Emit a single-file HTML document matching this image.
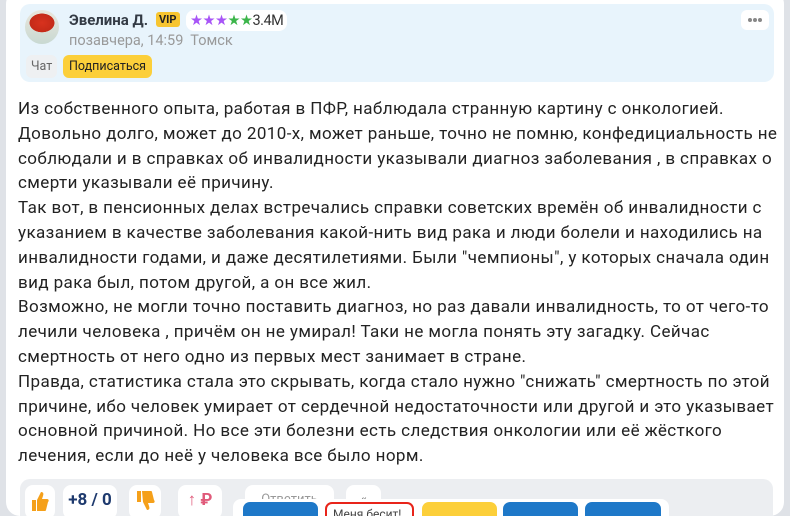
<!DOCTYPE html>
<html><head><meta charset="utf-8"><style>
*{margin:0;padding:0;box-sizing:border-box}
html,body{width:790px;height:516px;overflow:hidden}
body{background:#dfe2e7;font-family:"Roboto","Liberation Sans",sans-serif;position:relative}
.card{position:absolute;left:6px;top:-10px;width:778px;height:526px;background:#fff;border-radius:14px}
.head{position:absolute;left:20px;top:4px;width:754px;height:78px;background:#e8f4fc;border-radius:10px}
.av{position:absolute;left:25px;top:10px;width:34px;height:34px;border-radius:50%;background:radial-gradient(ellipse 60% 45% at 50% 38%,#d8321e 0,#c42a18 60%,transparent 62%),linear-gradient(#e9e6dc,#c9d9d2)}
.name{position:absolute;left:69px;top:11px;font-size:15px;font-weight:bold;color:#333a44}
.vip{position:absolute;left:156px;top:12px;background:#f7c530;color:#222;font-size:11px;font-weight:bold;padding:1px 3px;border-radius:3px}
.stars{position:absolute;left:186px;top:10px;background:#fff;border-radius:8px;height:21px;padding:0 4px;font-size:14.5px;line-height:21px;color:#333;letter-spacing:-0.5px}
.date{position:absolute;left:69px;top:32px;font-size:14.5px;color:#999}
.chat{position:absolute;left:26px;top:55px;background:#eef0f2;color:#666;font-size:12.5px;padding:4px 5px;border-radius:6px}
.sub{position:absolute;left:63px;top:55px;background:#fccf3a;color:#222;font-size:12.5px;padding:4px 6px;border-radius:6px}
.dots{position:absolute;left:741px;top:10px;width:28px;height:20px;background:#fff;border-radius:6px}
.dots i{position:absolute;top:8px;width:4px;height:4px;border-radius:50%;background:#888}
.txt{position:absolute;left:18px;top:97px;font-size:17px;line-height:24.8px;color:#222;white-space:nowrap;letter-spacing:0.4px}
.bar{position:absolute;left:20px;top:479px;width:753px;height:50px;background:#eceef1;border-radius:10px}
.b{position:absolute;top:485px;height:34px;background:#fff;border-radius:8px;text-align:center;line-height:30px}
.fl{position:absolute;left:233px;top:499px;width:436px;height:30px;background:#fff;border-radius:8px}
.fb{position:absolute;top:502px;height:30px;border-radius:7px;background:#1e78c8}
</style></head><body>
<div class="card"></div>
<div class="head"></div>
<div class="av"></div>
<div class="name">Эвелина Д.</div>
<div class="vip">VIP</div>
<div class="stars"><span style="color:#a855f7">★★★</span><span style="color:#3cb54a">★★</span>3.4M</div>
<div class="date">позавчера, 14:59&nbsp; Томск</div>
<div class="chat">Чат</div>
<div class="sub">Подписаться</div>
<div class="dots"><i style="left:7px"></i><i style="left:12px"></i><i style="left:17px"></i></div>
<div class="txt">Из собственного опыта, работая в ПФР, наблюдала странную картину с онкологией.<br>Довольно долго, может до 2010-х, может раньше, точно не помню, конфедициальность не<br>соблюдали и в справках об инвалидности указывали диагноз заболевания , в справках о<br>смерти указывали её причину.<br>Так вот, в пенсионных делах встречались справки советских времён об инвалидности с<br>указанием в качестве заболевания какой-нить вид рака и люди болели и находились на<br>инвалидности годами, и даже десятилетиями. Были "чемпионы", у которых сначала один<br>вид рака был, потом другой, а он все жил.<br>Возможно, не могли точно поставить диагноз, но раз давали инвалидность, то от чего-то<br>лечили человека , причём он не умирал! Таки не могла понять эту загадку. Сейчас<br>смертность от него одно из первых мест занимает в стране.<br>Правда, статистика стала это скрывать, когда стало нужно "снижать" смертность по этой<br>причине, ибо человек умирает от сердечной недостаточности или другой и это указывает<br>основной причиной. Но все эти болезни есть следствия онкологии или её жёсткого<br>лечения, если до неё у человека все было норм.</div>
<div class="bar"></div>
<div class="b" style="left:25px;width:30px"><svg width="20" height="22" viewBox="0 0 20 22" style="margin-top:6px"><path d="M2 9h4v11H2zM7 9l4-8c2 0 3 1 2 4l-1 3h5c2 0 2 2 1 3l-2 8c0 1-1 1-2 1H7z" fill="#f5a01a"/></svg></div>
<div class="b" style="left:63px;width:54px;font-weight:bold;color:#1e3a6e;font-size:17px">+8 / 0</div>
<div class="b" style="left:129px;width:32px"><svg width="20" height="22" viewBox="0 0 20 22" style="margin-top:4px"><path d="M2 2h4v11H2zM7 2h8c1 0 2 0 2 1l2 8c1 1 1 3-1 3h-5l1 3c1 3 0 4-2 4l-4-8z" fill="#f5a01a"/></svg></div>
<div class="b" style="left:178px;width:44px;color:#e05a7a;font-size:17px;font-weight:bold">↑ ₽</div>
<div class="b" style="left:245px;width:89px;color:#999;font-size:13px">Ответить</div>
<div class="b" style="left:346px;width:35px;color:#777;font-size:14px">«</div>
<div class="fl"></div>
<div class="fb" style="left:243px;width:75px"></div>
<div class="fb" style="left:325px;width:89px;background:#fff;border:2px solid #e8241a;font-size:12px;color:#444;padding-left:6px;line-height:20px">Меня бесит!</div>
<div class="fb" style="left:422px;width:75px;background:#fccf3a"></div>
<div class="fb" style="left:503px;width:75px"></div>
<div class="fb" style="left:585px;width:76px"></div>
</body></html>
